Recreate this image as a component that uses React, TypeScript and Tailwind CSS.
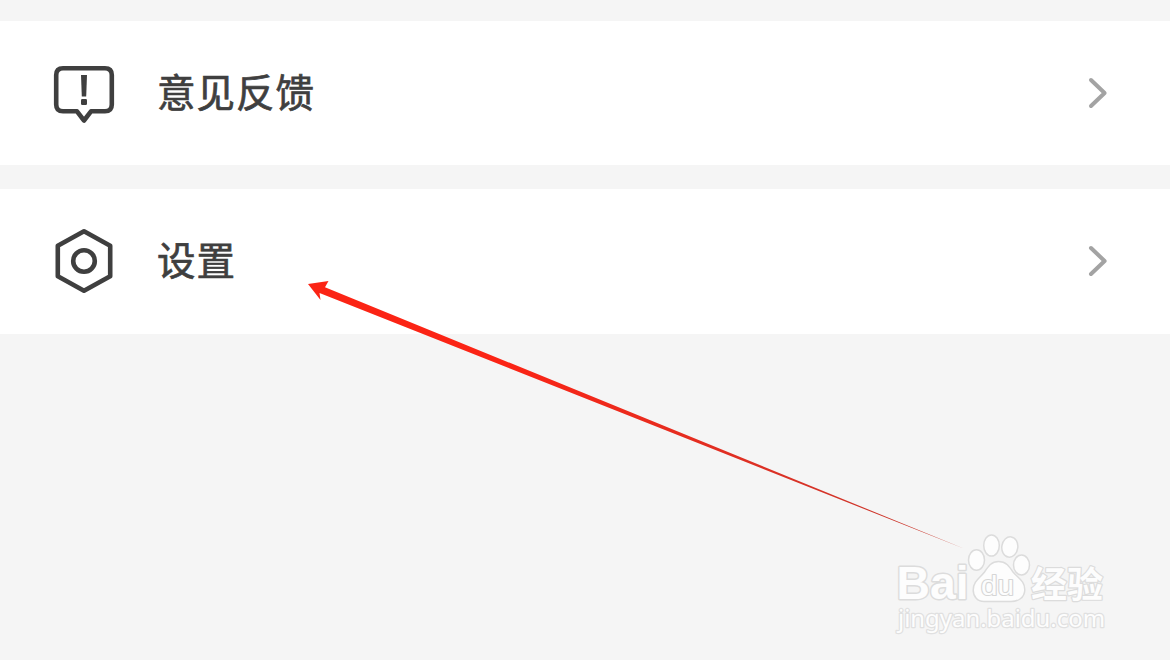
import React from 'react';

function FeedbackIcon() {
  return (
    <svg width="64" height="68" viewBox="52 59 64 68" fill="none" stroke="#3f3f3f" strokeWidth="4.6" strokeLinejoin="round">
      <path d="M63 68.2H105Q111.8 68.2 111.8 75V104.5Q111.8 111.3 105 111.3H91L84 120.5L77 111.3H63Q56.2 111.3 56.2 104.5V75Q56.2 68.2 63 68.2Z" />
      <path d="M81 75H87L86.2 96.6H81.8Z" fill="#3f3f3f" stroke="none" />
      <rect x="81" y="99" width="6" height="6" rx="1.2" fill="#3f3f3f" stroke="none" />
    </svg>
  );
}

function SettingsIcon() {
  return (
    <svg width="64" height="68" viewBox="52 227 64 68" fill="none" stroke="#3f3f3f" strokeWidth="4.6" strokeLinejoin="round">
      <path d="M84 231.2L110.2 245.8V276.2L84 290.8L57.8 276.2V245.8Z" />
      <circle cx="84" cy="261" r="10.8" />
    </svg>
  );
}

function Chevron() {
  return (
    <svg width="24" height="36" viewBox="0 0 24 36" fill="none" stroke="#a3a3a3" strokeWidth="4" strokeLinecap="round" strokeLinejoin="round">
      <path d="M5 5L18.6 18L5 31" />
    </svg>
  );
}

function MenuRow({ icon, label }: { icon: React.ReactNode; label: string }) {
  return (
    <div className="flex h-36 items-center bg-white pl-[52px] pr-[60px]">
      {icon}
      <span className="ml-[41px] flex-1 pb-[5px] text-[38.5px] leading-none tracking-[1px] text-[#3f3f3f] [-webkit-text-stroke:0.7px_#3f3f3f]">
        {label}
      </span>
      <Chevron />
    </div>
  );
}

function Arrow() {
  return (
    <svg className="pointer-events-none absolute inset-0" width="1170" height="660" viewBox="0 0 1170 660">
      <defs>
        <linearGradient id="arrow" x1="0" x2="1" y1="0" y2="0">
          <stop offset="0.3" stopColor="#fb2415" />
          <stop offset="1" stopColor="#c43a30" />
        </linearGradient>
      </defs>
      <path d="M308 284L328.5 281L325 287.2L965 549L319.5 293L320.5 300Z" fill="url(#arrow)" />
    </svg>
  );
}

function Watermark() {
  return (
    <svg
      className="absolute left-[885px] top-[525px]"
      width="235"
      height="120"
      viewBox="885 525 235 120"
      fill="#fdfdfd"
      stroke="#dcdcdc"
      strokeWidth="1.5"
      strokeLinejoin="round"
    >
      <ellipse cx="976.5" cy="560" rx="8" ry="10.2" />
      <ellipse cx="991.5" cy="545.5" rx="7.8" ry="10.6" />
      <ellipse cx="1009.8" cy="547" rx="8" ry="10.2" transform="rotate(8 1009.8 547)" />
      <ellipse cx="1021.5" cy="565" rx="8" ry="10" />
      <path d="M998.5 561.5C1006 561.5 1009 566 1013 572C1018 578 1025 581 1024.8 590C1024.5 598 1018 601.5 1011 601.5H984C977 601.5 973.2 596 973.2 590C973.2 581 980 578 984.5 572C988.5 566 991.5 561.5 998.5 561.5Z" />
      <text x="896.5" y="599" fontSize="47" fontFamily="'Liberation Sans', sans-serif" fontWeight="700" textLength="72" lengthAdjust="spacingAndGlyphs" paintOrder="stroke" strokeWidth="3">Bai</text>
      <text x="981" y="594.5" fontSize="28" fontFamily="'Liberation Sans', sans-serif" fontWeight="400" textLength="33" lengthAdjust="spacingAndGlyphs" paintOrder="stroke" stroke="#d6d6d6" strokeWidth="2.2">du</text>
      <text x="1031" y="597.5" fontSize="36" fontWeight="700" fontFamily="'Noto Sans CJK SC', sans-serif" textLength="72" lengthAdjust="spacingAndGlyphs" paintOrder="stroke" strokeWidth="2.4">经验</text>
      <text x="898" y="627" fontSize="23" fontFamily="'Noto Sans', sans-serif" textLength="207" lengthAdjust="spacingAndGlyphs" paintOrder="stroke" stroke="#e0e0e0" strokeWidth="2.4">jingyan.baidu.com</text>
    </svg>
  );
}

export default function App() {
  return (
    <div className="relative flex h-[660px] w-[1170px] flex-col gap-6 overflow-hidden bg-[#f5f5f5] pt-[21px] font-['Noto_Sans_CJK_SC',sans-serif]">
      <MenuRow icon={<FeedbackIcon />} label="意见反馈" />
      <div className="bg-white pb-px">
        <MenuRow icon={<SettingsIcon />} label="设置" />
      </div>
      <Watermark />
      <Arrow />
    </div>
  );
}
